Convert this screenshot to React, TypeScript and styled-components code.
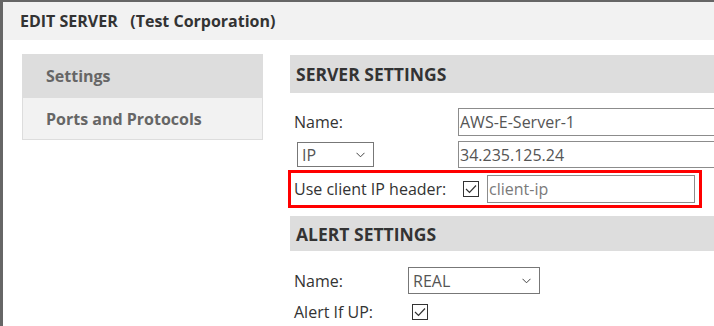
import React from "react";
import styled, { createGlobalStyle } from "styled-components";

const GlobalStyle = createGlobalStyle`
  html, body {
    margin: 0;
    padding: 0;
    background: #fff;
    font-family: "Open Sans", "Liberation Sans", sans-serif;
    color: #333;
  }
`;

const Frame = styled.div`
  width: 714px;
  height: 326px;
  box-sizing: border-box;
  border-top: 2px solid #666;
  border-left: 3px solid #666;
  overflow: hidden;
  display: flex;
  flex-direction: column;
`;

const TitleBar = styled.div`
  height: 38px;
  flex-shrink: 0;
  background: #f2f2f2;
  display: flex;
  align-items: center;
  padding-left: 17px;
  font-size: 16px;
  font-weight: 700;
  color: #333;
  white-space: pre;
`;

const Body = styled.div`
  display: flex;
  padding: 14px 0 0 19px;
  gap: 27px;
`;

const Sidebar = styled.div`
  width: 239px;
  flex-shrink: 0;
  display: flex;
  flex-direction: column;
  border: 1px solid #ddd;
  border-top: none;
  align-self: flex-start;
`;

const NavItem = styled.div<{ $active?: boolean }>`
  height: ${(p) => (p.$active ? "44px" : "41px")};
  display: flex;
  align-items: center;
  padding-left: 23px;
  font-size: 16px;
  font-weight: 700;
  color: #666;
  background: ${(p) => (p.$active ? "#ddd" : "#f2f2f2")};
`;

const Main = styled.div`
  width: 480px;
  flex-shrink: 0;
  display: flex;
  flex-direction: column;
  padding-top: 1px;
`;

const SectionHeader = styled.div<{ $h: number; $top?: number }>`
  height: ${(p) => p.$h}px;
  margin-top: ${(p) => p.$top ?? 0}px;
  background: #ddd;
  display: flex;
  align-items: center;
  padding-left: 6px;
  font-size: 17.5px;
  font-weight: 700;
  color: #333;
`;

const Row = styled.div<{ $top: number; $labelW: number }>`
  display: grid;
  grid-template-columns: ${(p) => p.$labelW}px 1fr;
  align-items: center;
  margin-top: ${(p) => p.$top}px;
`;

const Label = styled.div`
  font-size: 16px;
  color: #333;
  padding-left: 4px;
`;

const TextBox = styled.div<{ $h: number; $muted?: boolean }>`
  height: ${(p) => p.$h}px;
  box-sizing: border-box;
  border: 1px solid #8c8c8c;
  display: flex;
  align-items: center;
  padding-left: 1px;
  font-size: 16px;
  color: ${(p) => (p.$muted ? "#7a7a7a" : "#555")};
  white-space: nowrap;
`;

const Select = styled.div<{ $w: number; $h: number; $ml: number }>`
  width: ${(p) => p.$w}px;
  height: ${(p) => p.$h}px;
  margin-left: ${(p) => p.$ml}px;
  box-sizing: border-box;
  border: 1px solid #777;
  display: flex;
  align-items: center;
  justify-content: space-between;
  padding: 0 8px 0 4px;
  font-size: 16px;
  color: #555;
`;

const Chevron = () => (
  <svg width="9" height="6" viewBox="0 0 9 6">
    <polyline points="0.5,0.8 4.5,4.8 8.5,0.8" fill="none" stroke="#444" strokeWidth="1" />
  </svg>
);

const CheckBox = styled.span`
  width: 16px;
  height: 16px;
  box-sizing: border-box;
  border: 1px solid #333;
  display: inline-flex;
  align-items: center;
  justify-content: center;
  background: #fff;
`;

const Check = () => (
  <svg width="12" height="10" viewBox="0 0 12 10">
    <polyline points="1,5 4.5,8.5 11,1.5" fill="none" stroke="#333" strokeWidth="1.2" />
  </svg>
);

const Highlight = styled.div`
  margin: 2px 0 0 -2px;
  width: 414px;
  height: 38px;
  box-sizing: border-box;
  border: 3px solid #f00;
  display: flex;
  align-items: center;
  padding-left: 3px;
`;

const HighlightLabel = styled.div`
  font-size: 16px;
  color: #333;
  width: 169px;
`;

const HeaderInput = styled(TextBox)`
  width: 208px;
  margin-left: 8px;
`;

const CheckRow = styled.div`
  display: flex;
  align-items: center;
`;

export default function App() {
  return (
    <>
      <GlobalStyle />
      <Frame>
        <TitleBar>EDIT SERVER   (Test Corporation)</TitleBar>
        <Body>
          <Sidebar>
            <NavItem $active>Settings</NavItem>
            <NavItem>Ports and Protocols</NavItem>
          </Sidebar>
          <Main>
            <SectionHeader $h={38}>SERVER SETTINGS</SectionHeader>
            <Row $top={15} $labelW={168}>
              <Label>Name:</Label>
              <TextBox $h={28}>AWS-E-Server-1</TextBox>
            </Row>
            <Row $top={5} $labelW={168}>
              <Select $w={77} $h={25} $ml={7}>
                IP
                <Chevron />
              </Select>
              <TextBox $h={27}>34.235.125.24</TextBox>
            </Row>
            <Highlight>
              <HighlightLabel>Use client IP header:</HighlightLabel>
              <CheckRow>
                <CheckBox>
                  <Check />
                </CheckBox>
              </CheckRow>
              <HeaderInput $h={28} $muted>
                client-ip
              </HeaderInput>
            </Highlight>
            <SectionHeader $h={35} $top={8}>
              ALERT SETTINGS
            </SectionHeader>
            <Row $top={16} $labelW={118}>
              <Label>Name:</Label>
              <Select $w={132} $h={27} $ml={0}>
                REAL
                <Chevron />
              </Select>
            </Row>
            <Row $top={7} $labelW={122}>
              <Label>Alert If UP:</Label>
              <CheckRow>
                <CheckBox>
                  <Check />
                </CheckBox>
              </CheckRow>
            </Row>
          </Main>
        </Body>
      </Frame>
    </>
  );
}
